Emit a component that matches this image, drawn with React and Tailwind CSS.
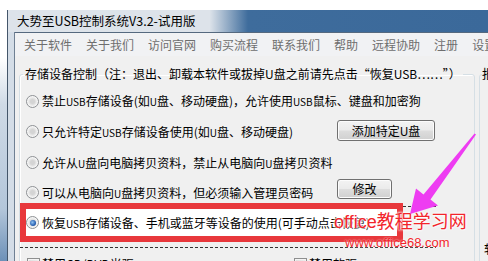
export default function App() {
  const menu = ['关于软件', '关于我们', '访问官网', '购买流程', '联系我们', '帮助', '远程协助', '注册', '设置']

  return (
    <div className="relative h-[261px] w-[488px] overflow-hidden bg-[linear-gradient(180deg,#fff_0,#fff_22%,#cfdae6_40%,#b3c6da_80%,#6d91b8_100%)] font-['Noto_Sans_CJK_SC',sans-serif] text-[12px] text-black">
      <div className="absolute left-0 top-0 h-[10px] w-full bg-white" />
      <div className="relative ml-[7px] mt-[10px] flex h-[251px] w-[481px] flex-col border-l border-[#44566a]">
        {/* title bar */}
        <div className="flex h-[22px] shrink-0 items-center bg-[linear-gradient(90deg,#dde3ea_0%,#dde3ea_42%,#3e6c9c_50%,#3b699a_100%)] pl-[9px] text-[12.5px] leading-[22px]">
          大势至USB控制系统V3.2-试用版
        </div>

        <div className="flex min-h-0 flex-1">
          <div className="w-[7px] shrink-0 border-r border-[#6f8093] bg-[#d4dde7]" />
          <div className="flex min-w-0 flex-1 flex-col border-t border-[#55697f] bg-[#f0f0f0]">
            {/* menu */}
            <div className="flex h-[23px] shrink-0 items-center bg-[#f1f2f4] pl-[2px] text-[#6e6e6e] leading-[23px]">
              {menu.map((m) => (
                <span key={m} className="whitespace-nowrap px-[7px]">{m}</span>
              ))}
            </div>

            <div className="flex items-start">
              <fieldset className="ml-[4px] mt-[10px] w-[456px] shrink-0 rounded-[3px] border border-[#d5dfe5] shadow-[inset_1px_1px_0_#fff]">
                <legend className="ml-[3px] whitespace-nowrap px-[2px] leading-[16px]">
                  存储设备控制（注：退出、卸载本软件或拔掉U盘之前请先点击“恢复USB……”）
                </legend>

                <div className="mt-[4px] flex h-[30px] items-center pl-[6px]">
                  <Radio />
                  <span className="ml-[3px] whitespace-nowrap">
                    禁止<span className="text-[10px]">USB</span>存储设备(如<span className="text-[10px]">U</span>盘、移动硬盘)，允许使用<span className="text-[10px]">USB</span>鼠标、键盘和加密狗
                  </span>
                </div>

                <div className="flex h-[31px] items-center pl-[6px]">
                  <Radio />
                  <span className="ml-[3px] w-[295px] whitespace-nowrap">
                    只允许特定<span className="text-[10px]">USB</span>存储设备使用(如<span className="text-[10px]">U</span>盘、移动硬盘)
                  </span>
                  <Button className="-mt-[2px] h-[21px] w-[98px]">添加特定U盘</Button>
                </div>

                <div className="flex h-[31px] items-center pl-[6px]">
                  <Radio />
                  <span className="ml-[3px] whitespace-nowrap">
                    允许从<span className="text-[10px]">U</span>盘向电脑拷贝资料，禁止从电脑向<span className="text-[10px]">U</span>盘拷贝资料
                  </span>
                </div>

                <div className="flex h-[25px] items-center pl-[6px] pt-[4px]">
                  <Radio />
                  <span className="ml-[3px] w-[295px] whitespace-nowrap">
                    可以从电脑向<span className="text-[10px]">U</span>盘拷贝资料，但必须输入管理员密码
                  </span>
                  <Button className="-mt-[8px] h-[20px] w-[55px]">修改</Button>
                </div>

                {/* selected option, boxed in red */}
                <div className="relative">
                  <div className="flex h-[39px] w-[383px] items-center border-[6px] border-[#e8383c] bg-white">
                    <Radio checked />
                    <span className="ml-[3px] whitespace-nowrap">
                      恢复<span className="text-[10px]">USB</span>存储设备、手机或蓝牙等设备的使用(可手动点击恢复)
                    </span>
                  </div>
                  <div className="absolute left-[383px] top-[3px] h-px w-[33px] bg-[repeating-linear-gradient(90deg,#333_0_3px,transparent_3px_5px)]" />
                  <div className="mt-[5px] h-px w-[416px] bg-[repeating-linear-gradient(90deg,#333_0_3px,transparent_3px_5px)]" />
                </div>

                <div className="mt-[8px] flex h-[16px] items-center pl-[7px]">
                  <Check />
                  <span className="ml-[2px] w-[252px] whitespace-nowrap">禁用CD/DVD光驱</span>
                  <Check />
                  <span className="ml-[2px] whitespace-nowrap">禁用软驱</span>
                </div>
              </fieldset>

              <fieldset className="ml-[4px] mt-[10px] h-[200px] w-[60px] shrink-0 rounded-[3px] border border-[#d5dfe5]">
                <legend className="ml-[2px] leading-[16px]">报</legend>
                <div className="mt-[158px] pl-[4px]">软件</div>
              </fieldset>
            </div>
          </div>
        </div>
      </div>

      {/* watermark */}
      <div className="pointer-events-none absolute left-[334px] top-[210px] whitespace-nowrap font-['Liberation_Sans','Noto_Sans_CJK_SC',sans-serif] text-[18px] leading-[24px] text-[#f2252b] [text-shadow:0_0_2px_#fff,0_0_3px_#fff,0_0_3px_#fff]">
        office教程学习网
      </div>
      <div className="pointer-events-none absolute left-[345px] top-[235px] whitespace-nowrap font-['Liberation_Sans',sans-serif] text-[13px] leading-[16px] text-[#f2252b] [text-shadow:0_0_2px_#fff]">
        www.office68.com
      </div>

      {/* arrow */}
      <svg className="pointer-events-none absolute left-0 top-0" width="488" height="261" viewBox="0 0 488 261">
        <polygon
          points="476,134.5 430.5,199.5 438,205.5 410,214 416,188.5 423.5,194.5 474.5,133.5"
          fill="#ee3cf2"
        />
      </svg>
    </div>
  )
}

function Radio({ checked }) {
  return (
    <span className="flex h-[13px] w-[13px] shrink-0 items-center justify-center rounded-full border border-[#8e9194] bg-[radial-gradient(circle,#d4d4d4_0_2px,#f6f6f6_5px)]">
      {checked && (
        <span className="h-[6px] w-[6px] rounded-full bg-[radial-gradient(circle_at_40%_40%,#8ec1f0_0,#2a62b4_60%,#183f7c_100%)]" />
      )}
    </span>
  )
}

function Check() {
  return (
    <span className="h-[13px] w-[13px] shrink-0 border border-[#8e8f8f] bg-[linear-gradient(135deg,#dcdcdc,#fbfbfb)] shadow-[inset_0_0_0_1px_#f4f4f4]" />
  )
}

function Button({ className, children }) {
  return (
    <span className={`flex shrink-0 items-center justify-center rounded-[3px] border border-[#707070] bg-[linear-gradient(#f3f3f3,#ebebeb_48%,#dddddd_52%,#d0d0d0)] shadow-[inset_0_0_0_1px_#fcfcfc] leading-none ${className}`}>
      {children}
    </span>
  )
}
